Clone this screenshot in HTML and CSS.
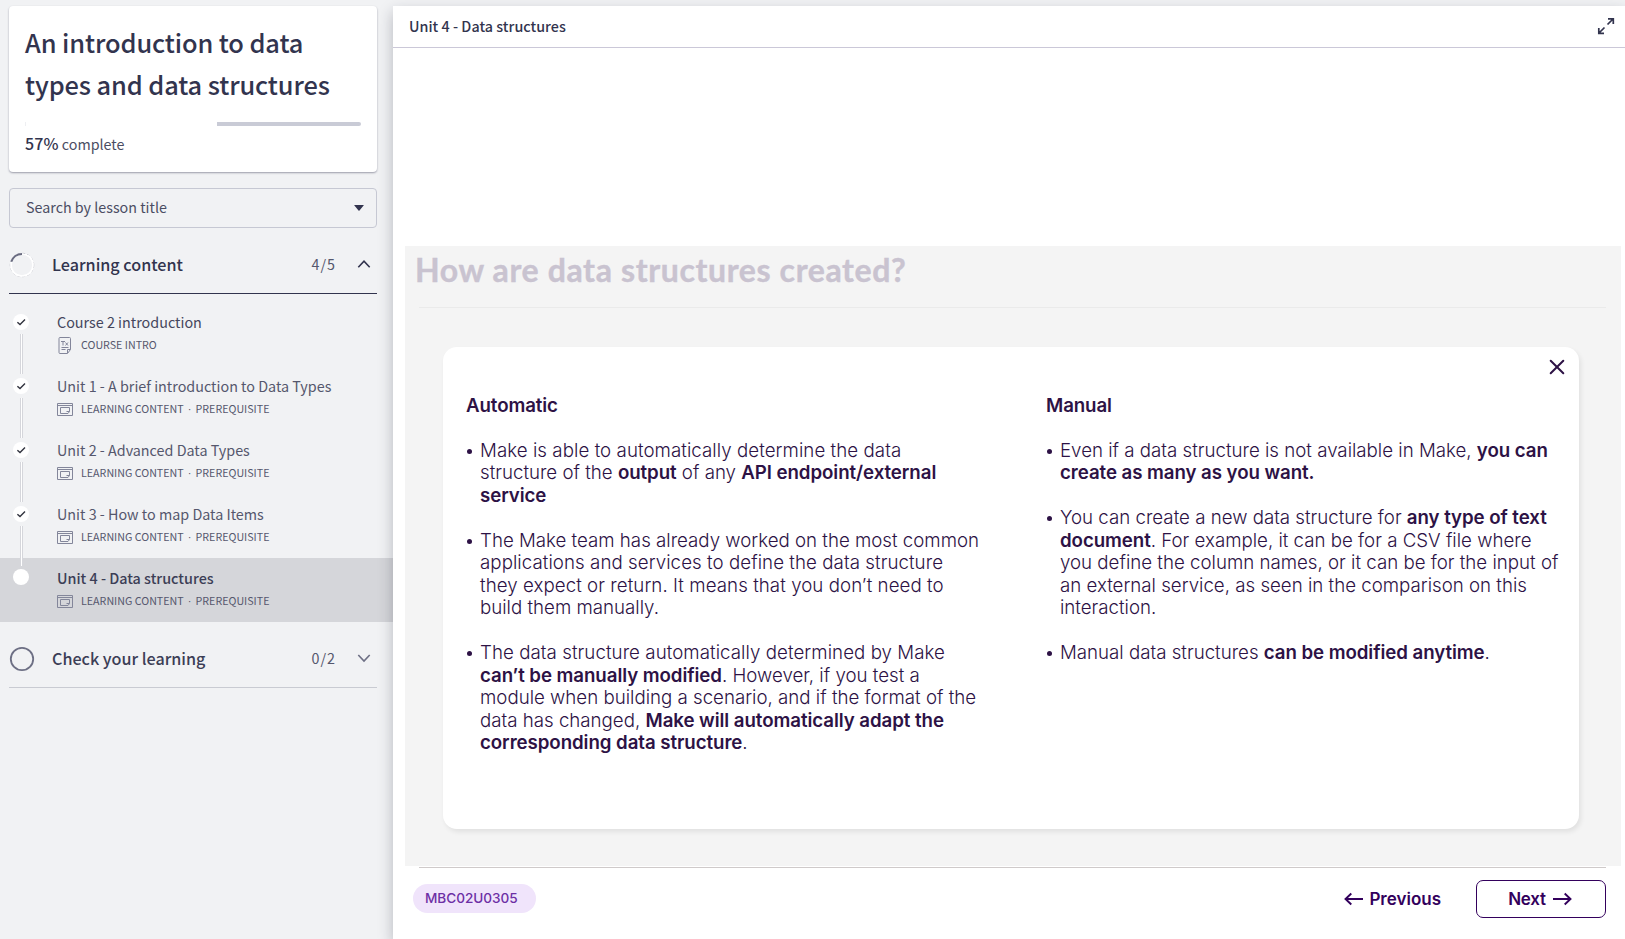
FILE: index.html
```html
<!DOCTYPE html>
<html lang="en">
<head>
<meta charset="utf-8">
<title>Unit 4 - Data structures</title>
<link rel="stylesheet" href="styles.css">
</head>
<body>
<svg class="defs" aria-hidden="true">
  <symbol id="check" viewBox="0 0 16 16"><path d="M4.400 8.200 7 10.500 12 5.400" fill="none" stroke="#32343f" stroke-width="1.400"/></symbol>
  <symbol id="window" viewBox="0 0 16 13"><g fill="none" stroke="#83869a" stroke-width="1"><path d="M.5.5h15v12H.5zM.5 2.500h15"/><path d="M3.500 4.500h9v4l-1.500 2H3.500z"/><path d="M12.500 8.500H9.500"/></g></symbol>
  <symbol id="doc" viewBox="0 0 16 17"><g fill="none" stroke="#83869a" stroke-width="1"><path d="M3 .5h9.500q1 0 1 1v11L10.500 16.500H3q-1 0-1-1v-14q0-1 1-1z"/><path d="M10.500 16v-3.500H13.500"/><path d="M4 4.500h4M6 4v4.500M8.500 5.500l2.500 3M11 5.500l-2.500 3M4.500 10.500h7M4.500 12.500h4"/></g></symbol>
</svg>
<div class="app">
  <aside class="sidebar">
    <section class="course-card">
      <h1 class="course-title">An introduction to data<br>types and data structures</h1>
      <div class="progress"><i class="progress-tick"></i><div class="progress-rest"></div></div>
      <p class="progress-label"><strong>57%</strong> complete</p>
    </section>
    <div class="search"><span>Search by lesson title</span>
      <svg width="10" height="6" viewBox="0 0 10 6"><path d="M.6 0h8.800q.7 0 .2.600L5.500 5.600q-.5.500-1 0L.4.600Q-.1 0 .6 0z" fill="#32344e"/></svg>
    </div>
    <div class="group group-open">
      <svg class="ring" width="26" height="26" viewBox="0 0 26 26"><circle cx="13" cy="13" r="11.700" fill="none" stroke="#b9bac3" stroke-width="1" stroke-dasharray="3 2"/><circle cx="13" cy="13" r="11" fill="none" stroke="#fff" stroke-width="1.700"/><path d="M2.300 9.800A11.200 11.200 0 0 1 13 1.900" fill="none" stroke="#696b80" stroke-width="2"/></svg>
      <span class="group-name">Learning content</span><span class="group-count">4/5</span>
      <svg width="14" height="10" viewBox="0 0 14 10"><path d="M1.300 8.200 7 2.200l5.700 6" fill="none" stroke="#32344e" stroke-width="1.600"/></svg>
    </div>
    <ul class="lessons">
      <li class="lesson"><div class="rail"><span class="dot"><svg width="16" height="16"><use href="#check"/></svg></span><span class="link"></span></div>
        <div class="lesson-text"><div class="lesson-name dark">Course 2 introduction</div><div class="meta"><svg width="16" height="17"><use href="#doc"/></svg><span class="intro">COURSE INTRO</span></div></div></li>
      <li class="lesson"><div class="rail"><span class="dot"><svg width="16" height="16"><use href="#check"/></svg></span><span class="link"></span></div>
        <div class="lesson-text"><div class="lesson-name">Unit 1 - A brief introduction to Data Types</div><div class="meta"><svg width="16" height="13"><use href="#window"/></svg><span>LEARNING CONTENT <i>·</i> PREREQUISITE</span></div></div></li>
      <li class="lesson"><div class="rail"><span class="dot"><svg width="16" height="16"><use href="#check"/></svg></span><span class="link"></span></div>
        <div class="lesson-text"><div class="lesson-name">Unit 2 - Advanced Data Types</div><div class="meta"><svg width="16" height="13"><use href="#window"/></svg><span>LEARNING CONTENT <i>·</i> PREREQUISITE</span></div></div></li>
      <li class="lesson"><div class="rail"><span class="dot"><svg width="16" height="16"><use href="#check"/></svg></span><span class="link"></span></div>
        <div class="lesson-text"><div class="lesson-name">Unit 3 - How to map Data Items</div><div class="meta"><svg width="16" height="13"><use href="#window"/></svg><span>LEARNING CONTENT <i>·</i> PREREQUISITE</span></div></div></li>
      <li class="lesson active"><div class="rail"><span class="dot"></span></div>
        <div class="lesson-text"><div class="lesson-name">Unit 4 - Data structures</div><div class="meta"><svg width="16" height="13"><use href="#window"/></svg><span>LEARNING CONTENT <i>·</i> PREREQUISITE</span></div></div></li>
    </ul>
    <div class="group group-closed">
      <svg class="ring" width="26" height="26" viewBox="0 0 26 26"><circle cx="13" cy="13" r="11.200" fill="none" stroke="#6d6f84" stroke-width="1.800"/></svg>
      <span class="group-name">Check your learning</span><span class="group-count">0/2</span>
      <svg width="14" height="10" viewBox="0 0 14 10"><path d="M1.300 2 7 8l5.700-6" fill="none" stroke="#6d6f84" stroke-width="1.600"/></svg>
    </div>
  </aside>
  <main class="viewer">
    <header class="viewer-head"><span>Unit 4 - Data structures</span>
      <svg width="18" height="18" viewBox="0 0 18 18"><g fill="none" stroke="#32344e" stroke-width="1.700"><path d="M10.500 7.500 16 2M11 1.800h5.300V7"/><path d="M7.500 10.500 2 16M1.800 11v5.300H7"/></g></svg>
    </header>
    <section class="slide">
      <h2 class="slide-title">How are data structures created?</h2>
      <div class="slide-rule"></div>
      <article class="panel">
        <svg class="close" width="16" height="16" viewBox="0 0 16 16"><path d="M1.700 1.700 14.300 14.300M14.300 1.700 1.700 14.300" stroke="#2d1245" stroke-width="2" stroke-linecap="round"/></svg>
        <div class="columns">
          <div class="col">
            <h3>Automatic</h3>
            <ul>
              <li><span class="wide">Make is able to automatically determine the data</span><br>structure of the <b>output</b> of any <b>API endpoint/external<br>service</b></li>
              <li>The Make team has already worked on the most common<br><span class="wide">applications and services to define the data structure</span><br><span class="wide">they expect or return. It means that you don’t need to</span><br>build them manually.</li>
              <li><span class="wide">The data structure automatically determined by Make</span><br><b>can’t be manually modified</b>. However, if you test a<br>module when building a scenario, and if the format of the<br>data has changed, <b>Make will automatically adapt the<br>corresponding data structure</b>.</li>
            </ul>
          </div>
          <div class="col">
            <h3>Manual</h3>
            <ul>
              <li>Even if a data structure is not available in Make, <b>you can<br>create as many as you want.</b></li>
              <li>You can create a new data structure for <b>any type of text<br>document</b>. For example, it can be for a CSV file where<br>you define the column names, or it can be for the input of<br>an external service, as seen in the comparison on this<br>interaction.</li>
              <li>Manual data structures <b>can be modified anytime</b>.</li>
            </ul>
          </div>
        </div>
      </article>
    </section>
    <footer class="foot">
      <span class="pill">MBC02U0305</span>
      <span class="prev"><svg width="20" height="14" viewBox="0 0 20 14"><path d="M19 7H1.800M7.300 1.500 1.500 7l5.800 5.500" fill="none" stroke="#33005c" stroke-width="1.900"/></svg>Previous</span>
      <span class="next">Next<svg width="20" height="14" viewBox="0 0 20 14"><path d="M1 7h17.200M12.700 1.500 18.500 7l-5.800 5.500" fill="none" stroke="#33005c" stroke-width="1.900"/></svg></span>
    </footer>
  </main>
</div>
</body>
</html>
```
FILE: styles.css
```css
* { box-sizing: border-box; }
body { margin: 0; background: #f1f2f4; font-family: "Noto Sans CJK SC", sans-serif; color: #32344e; overflow: hidden; }
h1, h2, h3, p, ul { margin: 0; padding: 0; }
ul { list-style: none; }
svg { display: block; flex: none; }
.defs { width: 0; height: 0; position: absolute; }
.app { display: flex; height: 939px; padding-top: 6px; }

.sidebar { width: 393px; flex: none; }
.course-card { margin: 0 16px 0 9px; height: 166px; padding: 15px 16px 0; background: #fff; border-radius: 4px; box-shadow: 0 1px 2px rgba(50, 52, 78, .45); }
.course-title { font-size: 25.4px; line-height: 42px; font-weight: 500; letter-spacing: -.1px; white-space: nowrap; }
.progress { display: flex; justify-content: space-between; height: 4px; margin-top: 17px; }
.progress-tick { width: 1px; background: #eeeff2; }
.progress-rest { width: 144px; background: #c9cbd6; border-radius: 0 2px 2px 0; }
.progress-label { margin-top: 5px; font-size: 14.3px; line-height: 24px; color: #4b4d63; }
.progress-label strong { font-size: 16px; font-weight: 500; letter-spacing: .1px; color: #32344e; }
.search { display: flex; align-items: center; justify-content: space-between; margin: 16px 16px 0 9px; height: 40px; padding: 0 12px 3px 16px; border: 1px solid #c6c8d3; border-radius: 4px; font-size: 14.3px; color: #4b4d63; }
.search svg { margin-top: 2px; }

.group { display: flex; align-items: center; margin: 0 16px 0 9px; height: 58px; padding-right: 6px; }
.group-open { margin-top: 8px; border-bottom: 1px solid #32344e; padding-bottom: 2px; }
.group-closed { margin-top: 8px; border-bottom: 1px solid #c9cbd2; padding-bottom: 2px; color: #3c3e56; }
.ring { margin-top: 2px; }
.group-name { margin-left: 17px; font-size: 16.15px; font-weight: 500; flex: 1; line-height: 24px; }
.group-count { font-size: 14.3px; letter-spacing: 1px; line-height: 24px; margin-right: 21px; padding-top: 1px; color: #55576d; }
.lessons { padding-top: 8px; }
.lesson { display: flex; height: 64px; }
.rail { width: 57px; padding: 12px 0 0 13px; flex: none; }
.dot { display: block; width: 16px; height: 16px; border-radius: 50%; background: #fff; }
.link { display: block; position: relative; z-index: 1; width: 3px; height: 40px; margin: 4px 0 0 7px; background: #fff; border: solid #d5d6db; border-width: 0 1px; }
.active { background: #d5d6da; }
.active .rail { padding-top: 11px; }
.lesson-text { padding-top: 10px; white-space: nowrap; }
.lesson-name { font-size: 14.35px; line-height: 20px; color: #55576d; }
.lesson-name.dark { color: #44465c; }
.active .lesson-name { font-weight: 500; color: #3c3e56; }
.meta { display: flex; align-items: center; gap: 8px; height: 20px; margin-top: 3px; font-size: 10.7px; color: #55576d; }
.meta span { margin-top: -2px; }
.meta i { font: 400 11px/1 "Liberation Sans", sans-serif; margin: 0 1.7px; }

.viewer { flex: 1; background: #fff; box-shadow: 0 6px 14px rgba(30, 32, 50, .28); display: flex; flex-direction: column; z-index: 2; }
.viewer-head { display: flex; align-items: center; justify-content: space-between; height: 42px; padding: 0 10px 1px 16px; border-bottom: 1px solid #cbc8d8; font-size: 14.3px; font-weight: 500; }
.viewer-head span { padding-bottom: 2px; letter-spacing: .03px; }
.slide { margin: 198px 4px 0 12px; height: 620px; background: #f4f4f4; }
.slide-title { font: 700 32px/38px Lato, sans-serif; letter-spacing: .63px; color: #c9c3d0; -webkit-text-stroke: .4px #c9c3d0; padding: 5px 0 0 10px; }
.slide-rule { height: 1px; margin: 18px 15px 0 14px; background: #eaeaea; }
.panel { position: relative; margin: 39px 42px 0 38px; height: 482px; padding-top: 48px; background: #fff; border-radius: 14px; box-shadow: 2px 3px 5px rgba(0, 0, 0, .08); }
.close { position: absolute; top: 12px; right: 14px; }
.columns { display: grid; grid-template-columns: 580px 1fr; padding-left: 23px; font: 300 18.7px/22.48px Inter, sans-serif; color: #2d1245; white-space: nowrap; }
.col h3 { font-size: 18.7px; line-height: 22.48px; font-weight: 600; letter-spacing: -.1px; }
.col li { position: relative; margin-top: 22.48px; padding-left: 14px; }
.col li::before { content: ""; position: absolute; left: 1px; top: 9px; width: 5px; height: 5px; border-radius: 50%; background: #2d1245; }
.col b { font-weight: 600; letter-spacing: -.07px; }
.wide { letter-spacing: .06px; }

.foot { display: flex; align-items: center; margin: 1px 19px 0 26px; padding-bottom: 8px; height: 70px; border-top: 1px solid #cfcaca; font-family: Inter, sans-serif; }
.pill { width: 123px; height: 29px; margin-left: -6px; padding-left: 12px; border-radius: 15px; background: #f0e4fb; color: #6d2fa5; font-size: 13.6px; line-height: 29px; font-weight: 500; letter-spacing: -.05px; }
.prev { display: flex; align-items: center; gap: 5px; margin-left: auto; font-size: 17px; font-weight: 600; color: #33005c; }
.next { display: flex; align-items: center; justify-content: center; gap: 6px; width: 130px; height: 38px; margin-left: 35px; padding-right: 2px; border: 1px solid #33005c; border-radius: 7px; font-size: 17px; font-weight: 600; letter-spacing: -.2px; color: #33005c; }
```
